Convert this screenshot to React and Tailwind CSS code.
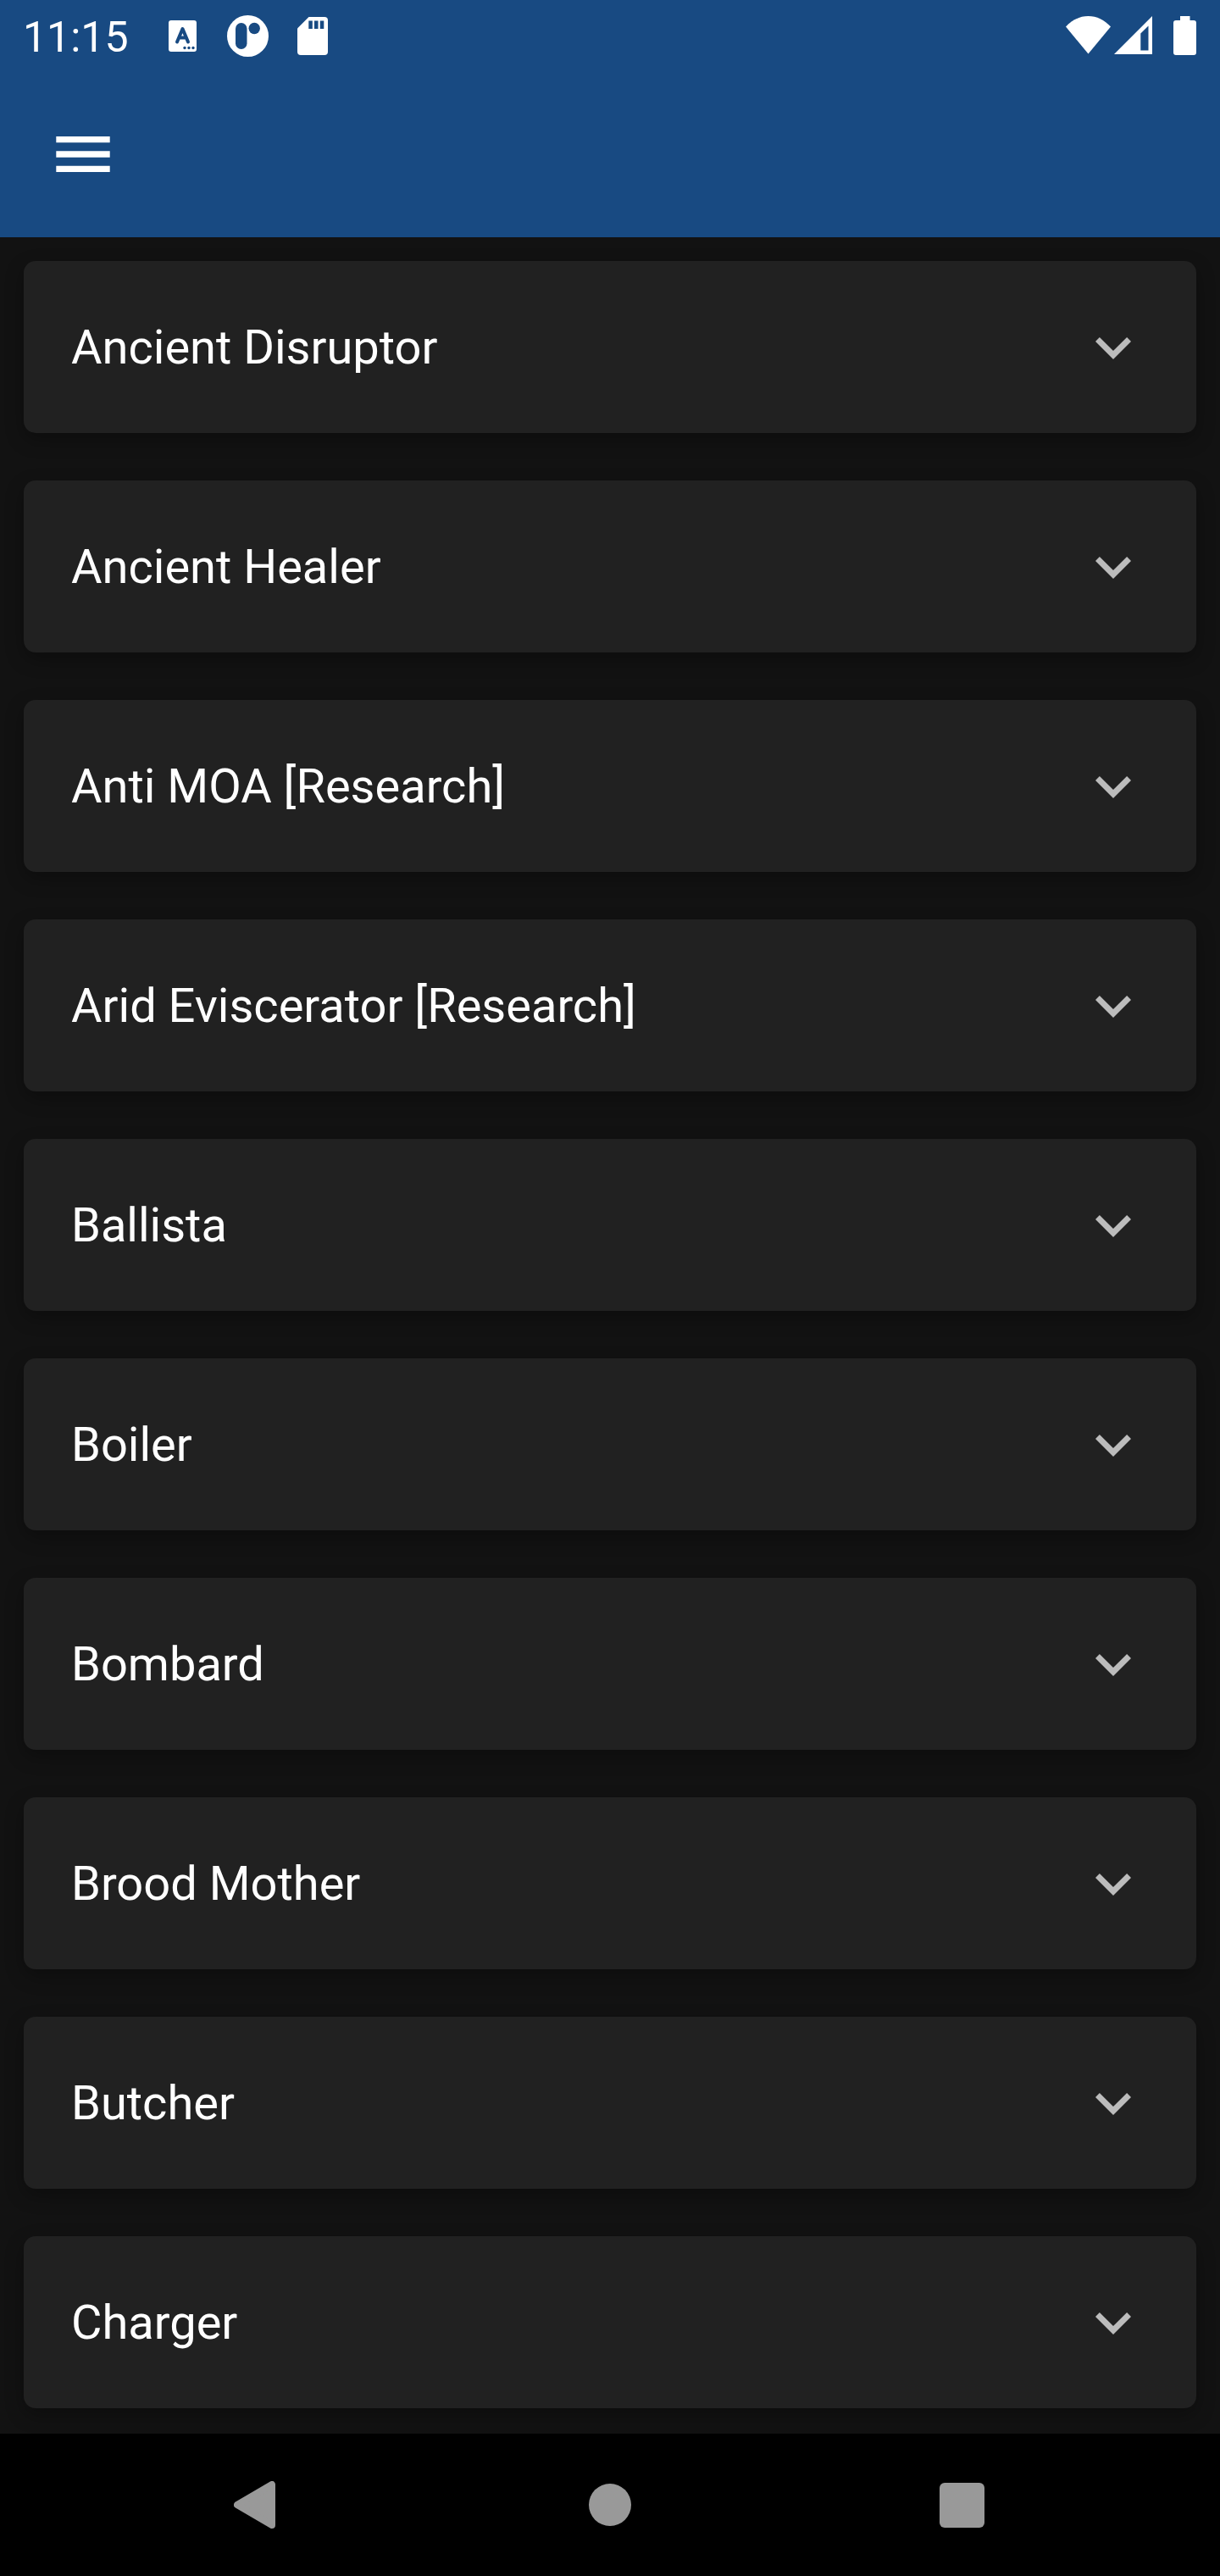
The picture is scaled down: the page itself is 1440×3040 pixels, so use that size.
const units = [
  "Ancient Disruptor",
  "Ancient Healer",
  "Anti MOA [Research]",
  "Arid Eviscerator [Research]",
  "Ballista",
  "Boiler",
  "Bombard",
  "Brood Mother",
  "Butcher",
  "Charger",
];

function StatusBar() {
  return (
    <div className="flex h-[88px] items-start justify-between">
      <div className="flex items-start">
        <span className="ml-[27px] mt-[15px] w-[127px] whitespace-nowrap text-[50px] leading-[58px]">11:15</span>
        <svg className="ml-[45px] mt-6 h-[37px] w-[33px]" viewBox="0 0 33 37">
          <rect width="33" height="37" rx="3" fill="#fff" />
          <path d="M10 25.500 16.500 10 23 25.500M12.500 20.500h8" fill="none" stroke="#184a82" strokeWidth="4" strokeLinecap="round" strokeLinejoin="round" />
          <circle cx="19" cy="32.500" r="1.700" fill="#184a82" />
          <circle cx="24" cy="32.500" r="1.700" fill="#184a82" />
          <circle cx="29" cy="32.500" r="1.700" fill="#184a82" />
        </svg>
        <svg className="ml-9 mt-[18px] size-[49px]" viewBox="0 0 49 49">
          <circle cx="24.500" cy="24.500" r="24.500" fill="#fff" />
          <rect x="10" y="9" width="13.500" height="31" rx="6.750" fill="#184a82" />
          <circle cx="32.200" cy="15.500" r="6.700" fill="#184a82" />
        </svg>
        <svg className="ml-[34px] mt-5 h-[45px] w-9" viewBox="0 0 36 45">
          <path d="M13.500 0H32a4 4 0 0 1 4 4v37a4 4 0 0 1-4 4H4a4 4 0 0 1-4-4V13.500Z" fill="#fff" />
          <path d="M13.300 4.500h4.500v9.500h-4.500ZM20 4.500h4.500v9.500H20ZM26.800 4.500h4.500v9.500h-4.500Z" fill="#184a82" />
        </svg>
      </div>
      <div className="flex items-start">
        <svg className="mt-[19px] h-[45px] w-[53px]" viewBox="0 0 53 45">
          <path d="M0 12.500C7.500 4.500 16.500 0 26.500 0S45.500 4.500 53 12.500L26.500 44.500Z" fill="#fff" />
        </svg>
        <svg className="ml-[4px] mt-[19px] h-[45px] w-[45px]" viewBox="0 0 45 45">
          <path d="M45 0V45H0ZM40.500 11.500 31.300 20.500V40.500H40.500Z" fill="#fff" fillRule="evenodd" />
        </svg>
        <svg className="ml-[25px] mr-7 mt-[19px] h-[46px] w-[27px]" viewBox="0 0 27 46">
          <path d="M8 0H19.500V5H24a3 3 0 0 1 3 3V43a3 3 0 0 1-3 3H3a3 3 0 0 1-3-3V8a3 3 0 0 1 3-3H8Z" fill="#fff" />
        </svg>
      </div>
    </div>
  );
}

function UnitCard({ name }) {
  return (
    <li className="flex h-[203px] shrink-0 items-center justify-between rounded-[14px] bg-[#212121] pl-14 pr-[77px] shadow-[0_8px_22px_rgba(0,0,0,0.3)]">
      <span className="whitespace-nowrap text-[56px] leading-[66px]">{name}</span>
      <svg className="mt-[3px] h-[26px] w-[42px]" viewBox="0 0 42 26">
        <path d="M4.900 0 21 16.100 37.100 0 42 4.900 21 26 0 4.900Z" fill="#bcbcbc" />
      </svg>
    </li>
  );
}

export default function App() {
  return (
    <div className="flex h-[3040px] w-[1440px] flex-col overflow-hidden bg-[#121212] font-['Roboto',sans-serif] text-white">
      <header className="h-[280px] shrink-0 bg-[#184a82]">
        <StatusBar />
        <button className="ml-[66px] mt-[73px] block" aria-label="Open menu">
          <svg className="h-[42px] w-16" viewBox="0 0 64 42">
            <path d="M.3 0H63.700V7.300H.3ZM.3 17.300H63.700V24.700H.3ZM.3 34.700H63.700V42H.3Z" fill="#fff" />
          </svg>
        </button>
      </header>
      <ul className="flex h-[2592px] shrink-0 flex-col gap-14 overflow-hidden px-7 pt-7">
        {units.map((name) => (
          <UnitCard key={name} name={name} />
        ))}
      </ul>
      <nav className="flex h-[168px] shrink-0 items-center bg-black pl-[276px]">
        <svg className="h-14 w-[49px]" viewBox="0 0 49 56">
          <path d="M4 28 45 4V52Z" fill="#999" stroke="#999" strokeWidth="8" strokeLinejoin="round" />
        </svg>
        <span className="ml-[370px] size-[50px] rounded-full bg-[#999]" />
        <span className="ml-[363.500px] size-[53px] rounded-[6px] bg-[#999]" />
      </nav>
    </div>
  );
}
